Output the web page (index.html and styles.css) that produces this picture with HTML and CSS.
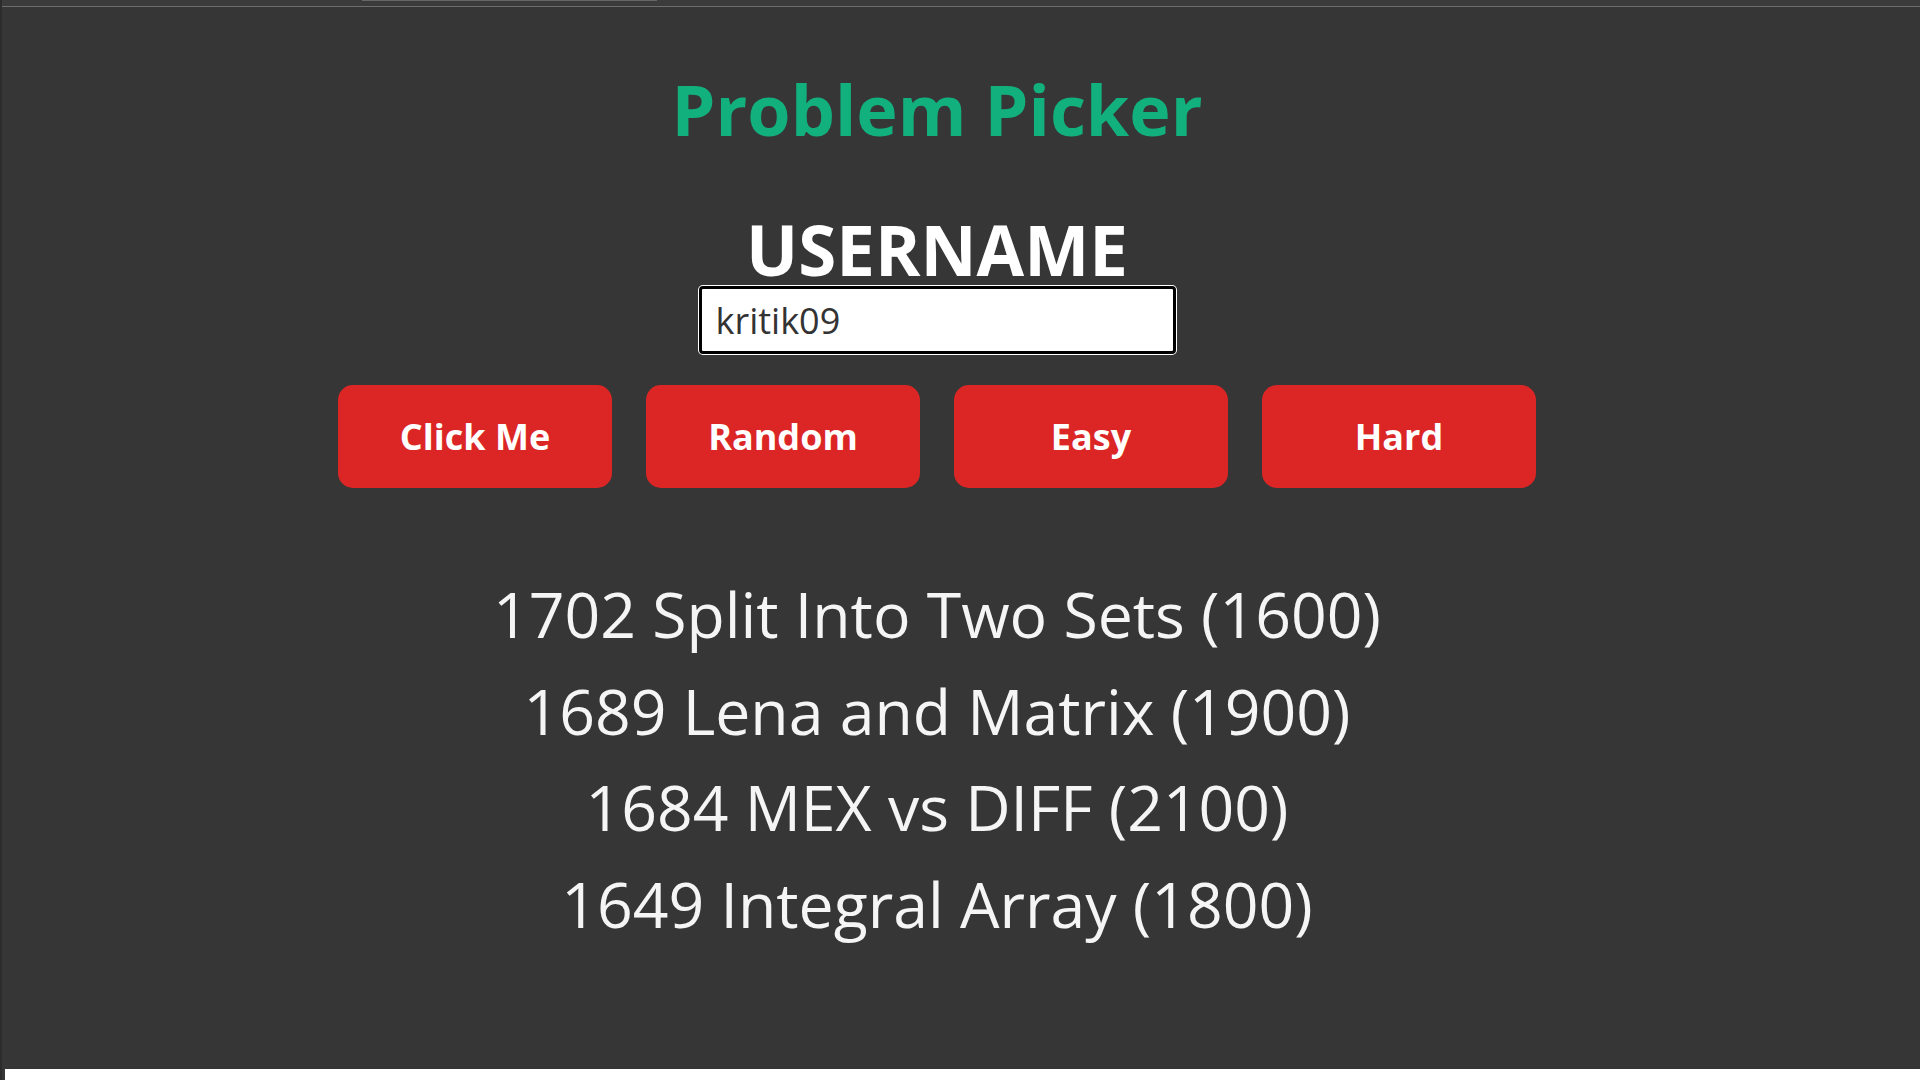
FILE: index.html
```html
<!DOCTYPE html>
<html lang="en">
<head>
<meta charset="utf-8">
<title>Problem Picker</title>
<link rel="stylesheet" href="styles.css">
</head>
<body>
<div class="topbar"><div class="tab"></div></div>
<main class="app">
  <h1 class="title">Problem Picker</h1>
  <label class="label" for="user">USERNAME</label>
  <input class="username" id="user" type="text" value="kritik09">
  <div class="buttons">
    <button class="btn">Click Me</button>
    <button class="btn">Random</button>
    <button class="btn">Easy</button>
    <button class="btn">Hard</button>
  </div>
  <ul class="problems">
    <li>1702 Split Into Two Sets (1600)</li>
    <li>1689 Lena and Matrix (1900)</li>
    <li>1684 MEX vs DIFF (2100)</li>
    <li>1649 Integral Array (1800)</li>
  </ul>
</main>
<div class="bottom-strip"></div>
</body>
</html>
```
FILE: styles.css
```css
html, body {
  margin: 0;
  padding: 0;
  height: 100%;
}
body {
  background: #363636;
  font-family: "Open Sans", "Noto Sans", sans-serif;
  display: flex;
  flex-direction: column;
  overflow: hidden;
  border-left: 2px solid #2c2c2c;
  box-sizing: border-box;
}
.topbar {
  height: 6px;
  background: #3b3b3b;
  border-bottom: 1px solid #6e6e6e;
  flex: none;
  position: relative;
}
.tab {
  position: absolute;
  left: 360px;
  top: 0;
  width: 295px;
  height: 1px;
  background: #666;
}
.app {
  flex: 1;
  display: flex;
  flex-direction: column;
  align-items: center;
  padding-right: 48px;
}
.title {
  margin: 60px 0 0;
  font-size: 70px;
  line-height: 1.2;
  font-weight: 700;
  color: #12b07c;
}
.label {
  margin-top: 64px;
  font-size: 69px;
  line-height: 1;
  font-weight: 700;
  color: #ffffff;
}
.username {
  margin-top: 2px;
  width: 477px;
  height: 68px;
  box-sizing: border-box;
  border: 3px solid #000;
  border-radius: 4px;
  box-shadow: 0 0 0 1px #fff;
  background: #fff;
  padding: 0 14px;
  font-family: "Open Sans", sans-serif;
  font-size: 36px;
  color: #333;
  outline: none;
}
.buttons {
  margin-top: 31px;
  display: flex;
  gap: 34px;
}
.btn {
  width: 274px;
  height: 103px;
  border: none;
  border-radius: 15px;
  background: #dc2626;
  color: #fff;
  font-family: "Open Sans", sans-serif;
  font-weight: 700;
  font-size: 36px;
}
.problems {
  list-style: none;
  margin: 78px 0 0;
  padding: 0;
  text-align: center;
}
.problems li {
  font-size: 62.5px;
  line-height: 96.7px;
  color: #f5f5f5;
}
.bottom-strip {
  flex: none;
  height: 11px;
  background: #fff;
  margin-left: 3px;
}
```
